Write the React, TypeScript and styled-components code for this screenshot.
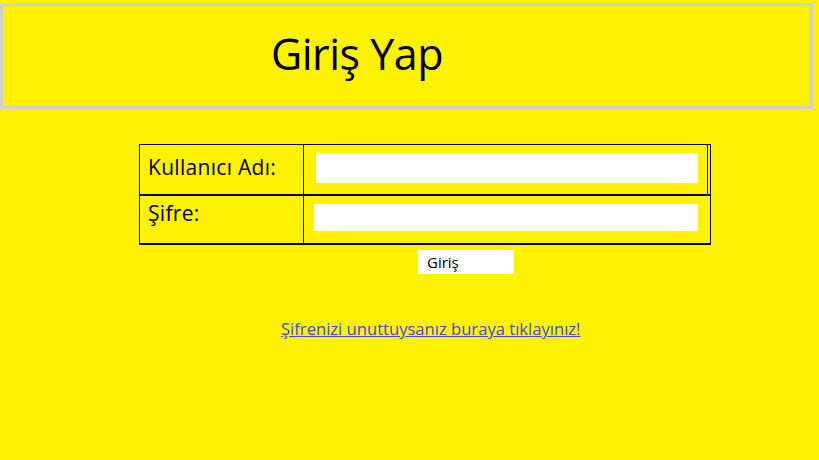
import React from "react";
import styled, { createGlobalStyle } from "styled-components";

const Global = createGlobalStyle`
  html, body {
    margin: 0;
    padding: 0;
    background: #fff200;
  }
  body {
    font-family: "Open Sans", "Liberation Sans", sans-serif;
    color: #000;
  }
`;

const Page = styled.div`
  display: flex;
  flex-direction: column;
  align-items: flex-start;
  padding-top: 3px;
  min-height: 457px;
`;

const Header = styled.header`
  box-sizing: border-box;
  width: 813px;
  height: 106px;
  border: 3px solid #d0d0d0;
  padding-left: 268px;
  display: flex;
  align-items: center;
`;

const Title = styled.h1`
  margin: 0;
  font-weight: 400;
  font-size: 43px;
  line-height: 1;
  padding-bottom: 6px;
  letter-spacing: -0.5px;
`;

const Form = styled.form`
  margin: 35px 0 0 139px;
  display: flex;
  flex-direction: column;
  align-items: flex-start;
`;

const Row = styled.div<{ $h: number; $first?: boolean }>`
  box-sizing: border-box;
  display: grid;
  grid-template-columns: 163px 1fr;
  width: 572px;
  height: ${(p) => p.$h}px;
  border: 1px solid #000;
  border-top-width: ${(p) => (p.$first ? 1 : 0)}px;
  border-bottom-width: 2px;
  ${(p) => (p.$first ? "box-shadow: inset -2px 0 0 #fff200, inset -3px 0 0 #000;" : "")}
`;

const Label = styled.label<{ $top: number }>`
  padding: ${(p) => p.$top}px 0 0 8px;
  font-size: 21px;
  line-height: 26px;
  letter-spacing: 0.3px;
`;

const Cell = styled.div<{ $pl: number; $pt: number; $pr: number }>`
  border-left: 1px solid #000;
  padding: ${(p) => p.$pt}px ${(p) => p.$pr}px 0 ${(p) => p.$pl}px;
`;

const Input = styled.input<{ $h: number }>`
  display: block;
  box-sizing: border-box;
  width: 100%;
  height: ${(p) => p.$h}px;
  border: none;
  background: #fff;
  outline: none;
  margin: 0;
  padding: 0 4px;
`;

const Button = styled.button`
  margin: 5px 0 0 279px;
  box-sizing: border-box;
  width: 96px;
  height: 24px;
  border: none;
  background: #fff;
  padding: 0 0 0 9px;
  text-align: left;
  font-family: "Open Sans", "Liberation Sans", sans-serif;
  font-size: 15px;
  line-height: 24px;
  color: #000;
`;

const Link = styled.a`
  margin: 44px 0 0 281px;
  font-size: 16.6px;
  line-height: 22px;
  color: #3a4ee0;
  text-decoration: underline;
  letter-spacing: 0;
`;

export default function App() {
  return (
    <>
      <Global />
      <Page>
        <Header>
          <Title>Giriş Yap</Title>
        </Header>
        <Form onSubmit={(e) => e.preventDefault()}>
          <Row $h={52} $first>
            <Label $top={9}>Kullanıcı Adı:</Label>
            <Cell $pl={12} $pt={8} $pr={12}>
              <Input $h={30} />
            </Cell>
          </Row>
          <Row $h={49}>
            <Label $top={4}>Şifre:</Label>
            <Cell $pl={10} $pt={8} $pr={12}>
              <Input $h={27} type="password" />
            </Cell>
          </Row>
          <Button type="submit">Giriş</Button>
        </Form>
        <Link href="#">Şifrenizi unuttuysanız buraya tıklayınız!</Link>
      </Page>
    </>
  );
}
